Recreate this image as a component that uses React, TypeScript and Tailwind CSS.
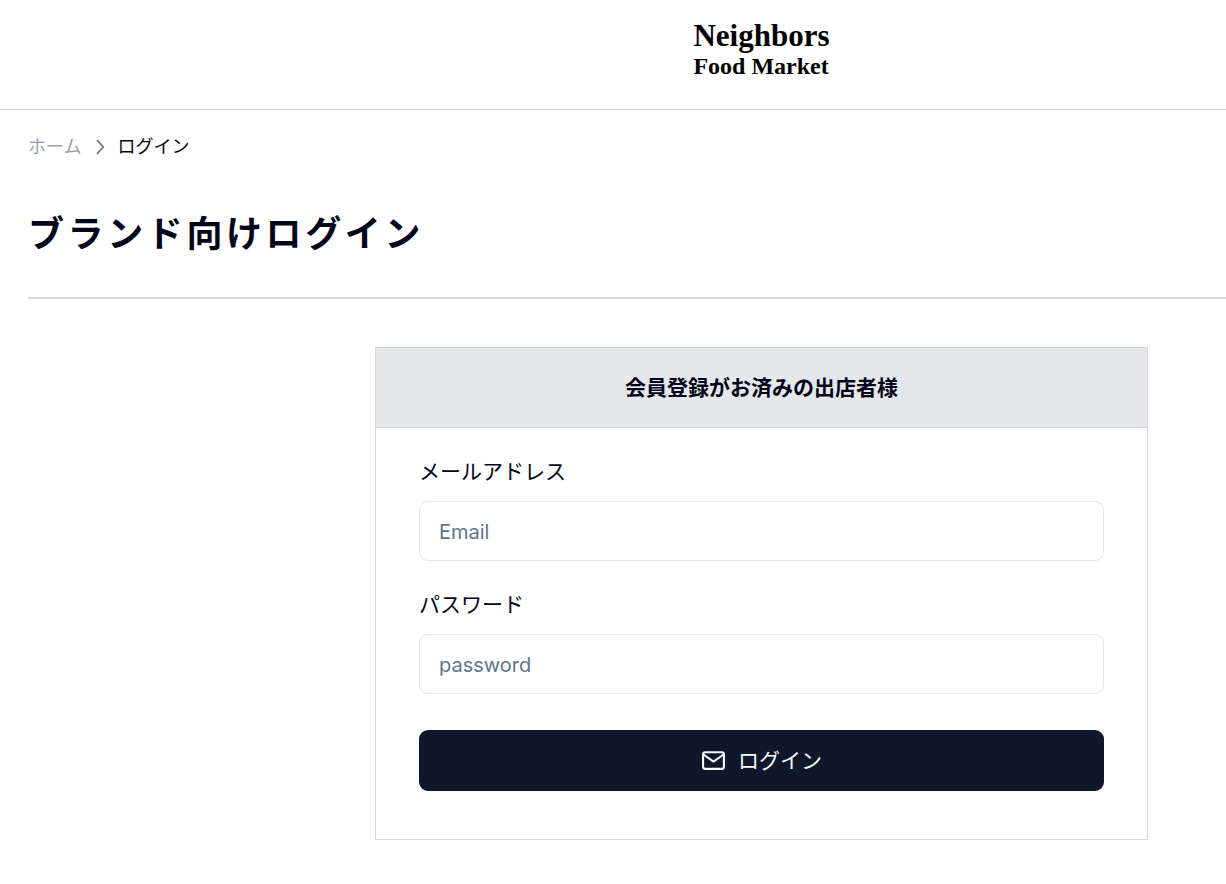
import React from 'react';
import {FiMail} from 'react-icons/fi';
import {RxChevronRight} from 'react-icons/rx';

type FieldProps = {
    id: string;
    label: string;
    type: string;
    placeholder: string;
};

function Field({id, label, type, placeholder}: FieldProps) {
    return (
        <div>
            <label htmlFor={id} className="block text-[21px] leading-7">{label}</label>
            <input
                id={id}
                name={id}
                type={type}
                placeholder={placeholder}
                className="mt-[15px] block h-15 w-full rounded-[9px] border border-slate-200 bg-white px-[19px] pt-[2px] text-xl text-slate-950 placeholder:text-slate-500 placeholder:opacity-100"
            />
        </div>
    );
}

export default function App() {
    return (
        <div className="overflow-hidden bg-white font-['Inter','Noto_Sans_CJK_JP',sans-serif] text-slate-950">
            <header className="flex h-[110px] justify-center border-b border-gray-300 pt-5 pl-[297px]">
                <a href="#" className="font-['Liberation_Serif',serif] font-bold text-black">
                    <span className="block text-[31px] leading-8">Neighbors</span>
                    <span className="block text-2xl leading-7">Food Market</span>
                </a>
            </header>

            <main className="pl-7">
                <nav aria-label="breadcrumb" className="flex items-center pt-[23px] text-lg leading-7">
                    <a href="#" className="text-gray-400">ホーム</a>
                    <RxChevronRight className="mx-[6px] size-6 text-slate-500"/>
                    <span>ログイン</span>
                </nav>

                <h1 className="mt-[49px] border-b-2 border-gray-300 pb-[39px] text-4xl leading-12 font-bold tracking-widest">
                    ブランド向けログイン
                </h1>

                <div className="flex justify-center pt-12 pb-11 pl-[269px]">
                    <section className="w-full max-w-[773px] border border-gray-300">
                        <h2 className="border-b border-gray-300 bg-gray-200 pt-[26px] pb-[25px] text-center text-[21px] leading-7 font-bold">
                            会員登録がお済みの出店者様
                        </h2>
                        <form
                            className="flex flex-col gap-[30px] px-[43px] pt-[30px] pb-12"
                            onSubmit={(e) => e.preventDefault()}>
                            <Field id="email" label="メールアドレス" type="email" placeholder="Email"/>
                            <Field id="password" label="パスワード" type="password" placeholder="password"/>
                            <button
                                type="submit"
                                className="mt-[6px] flex h-[61px] w-full items-center justify-center gap-3 rounded-[9px] bg-slate-900 text-[21px] text-slate-50">
                                <FiMail className="size-[25px]"/>
                                ログイン
                            </button>
                        </form>
                    </section>
                </div>
            </main>
        </div>
    );
}
